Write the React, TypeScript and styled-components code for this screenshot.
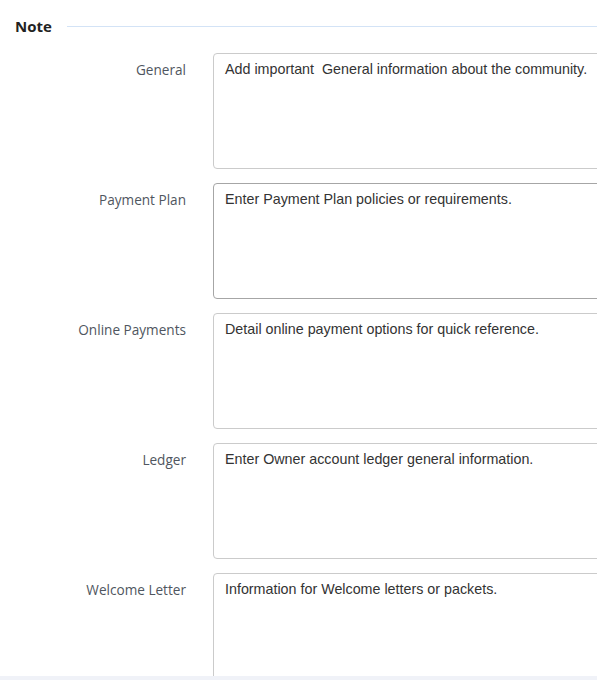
import React from "react"
import styled, { createGlobalStyle } from "styled-components"

const GlobalStyle = createGlobalStyle`
  html, body {
    margin: 0;
    padding: 0;
    background: #ffffff;
  }
  body {
    font-family: "Open Sans", "Noto Sans", sans-serif;
    overflow: hidden;
  }
`

const Page = styled.div`
  width: 597px;
  height: 680px;
  display: flex;
  flex-direction: column;
  overflow: hidden;
`

const Content = styled.div`
  flex: 1;
  overflow: hidden;
  padding: 14px 0 0 15px;
`

const Header = styled.div`
  display: flex;
  align-items: center;
  gap: 15px;
  height: 24px;
`

const Title = styled.h2`
  margin: 0;
  font-size: 15px;
  font-weight: 700;
  color: #222;
  line-height: 24px;
`

const Rule = styled.div`
  flex: 1;
  height: 1px;
  background: #d3e3f6;
`

const Rows = styled.div`
  display: flex;
  flex-direction: column;
  gap: 14px;
  margin-top: 15px;
`

const Row = styled.div`
  display: grid;
  grid-template-columns: 171px 400px;
  column-gap: 27px;
  align-items: start;
`

const Label = styled.label`
  text-align: right;
  font-size: 13.6px;
  color: #4f5660;
  padding-top: 8px;
  line-height: 18px;
`

const Area = styled.textarea<{ $hover?: boolean }>`
  box-sizing: border-box;
  width: 400px;
  height: 116px;
  margin: 0;
  padding: 7px 11px;
  border: 1px solid ${(p) => (p.$hover ? "#a6a6a6" : "#cbcbcb")};
  border-radius: 4px;
  resize: none;
  font-family: "Liberation Sans", Arial, sans-serif;
  font-size: 14.3px;
  line-height: 17px;
  color: #333;
  outline: none;

  &::placeholder {
    color: #333;
    opacity: 1;
  }
`

const Footer = styled.div`
  height: 4px;
  background: #f0f2f8;
`

const notes = [
  { label: "General", text: "Add important  General information about the community." },
  { label: "Payment Plan", text: "Enter Payment Plan policies or requirements.", hover: true },
  { label: "Online Payments", text: "Detail online payment options for quick reference." },
  { label: "Ledger", text: "Enter Owner account ledger general information." },
  { label: "Welcome Letter", text: "Information for Welcome letters or packets." },
]

export default function App() {
  return (
    <Page>
      <GlobalStyle />
      <Content>
        <Header>
          <Title>Note</Title>
          <Rule />
        </Header>
        <Rows>
          {notes.map((n) => (
            <Row key={n.label}>
              <Label>{n.label}</Label>
              <Area $hover={n.hover} placeholder={n.text} />
            </Row>
          ))}
        </Rows>
      </Content>
      <Footer />
    </Page>
  )
}
